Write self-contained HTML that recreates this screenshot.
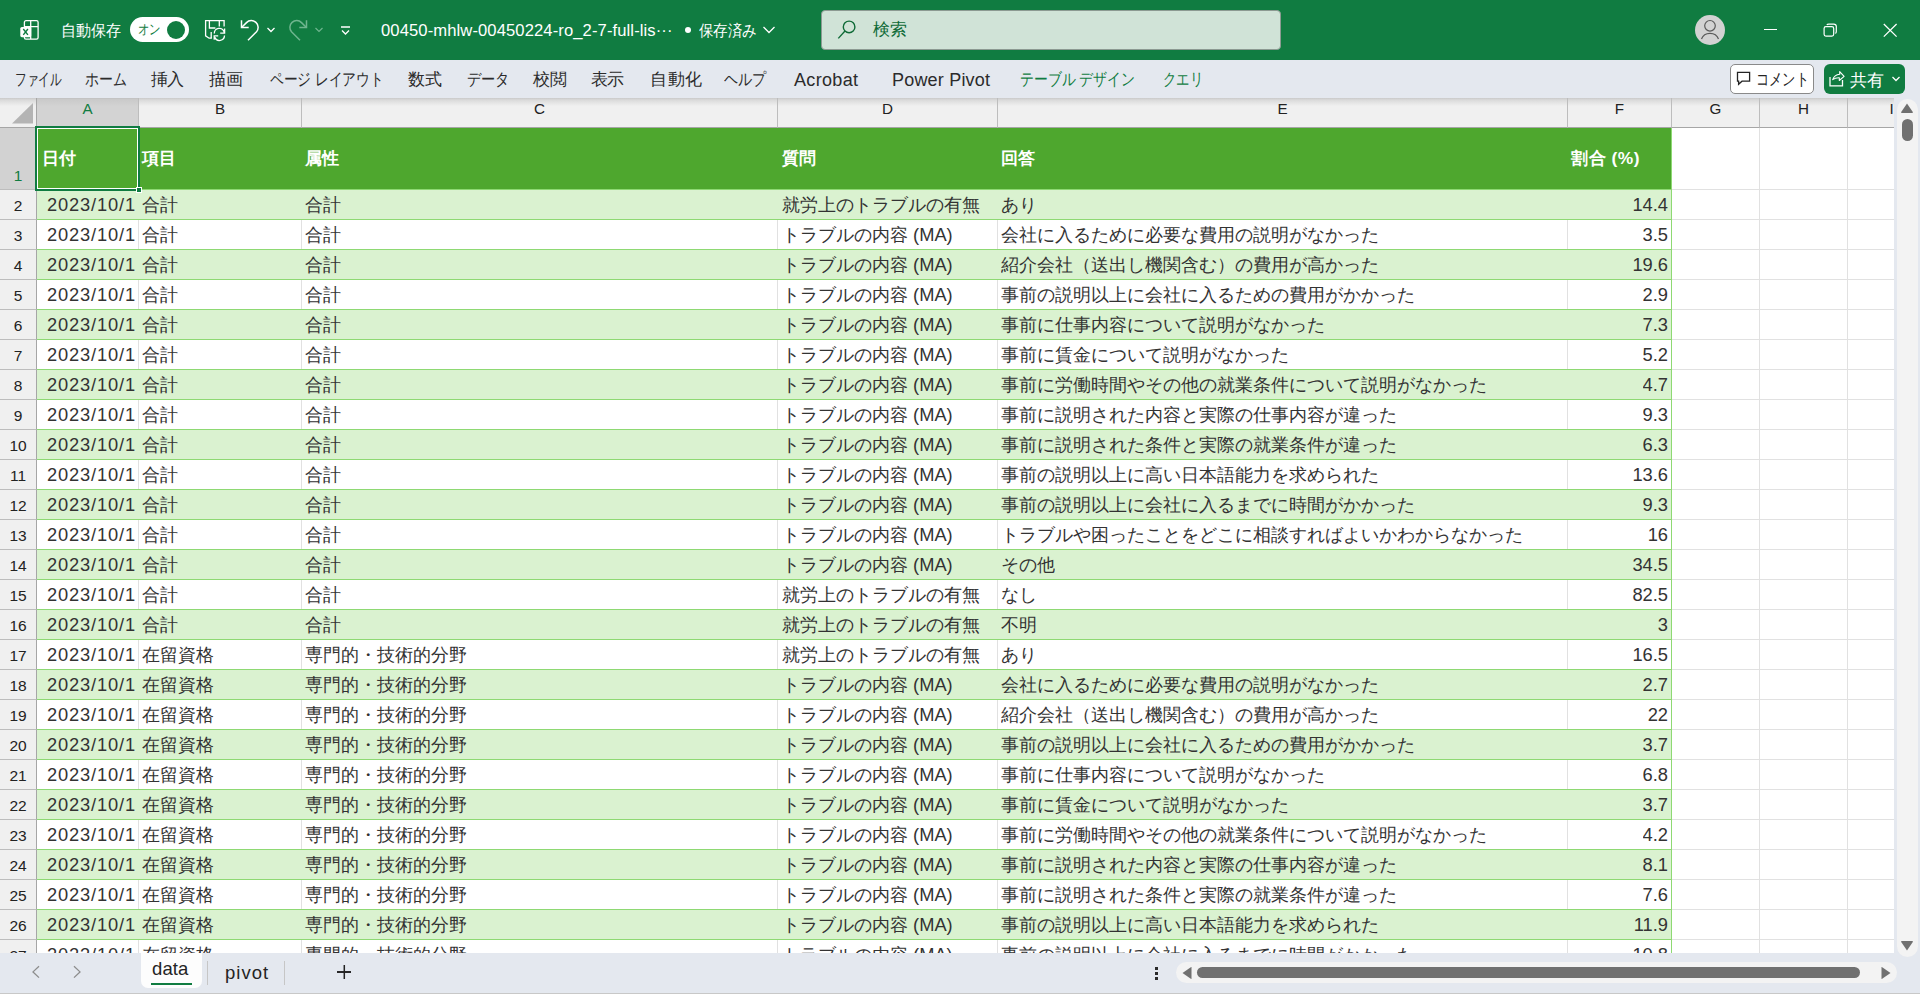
<!DOCTYPE html>
<html><head><meta charset="utf-8">
<style>
*{box-sizing:border-box;margin:0;padding:0}
html,body{width:1920px;height:994px;overflow:hidden;background:#fff;font-family:"Liberation Sans",sans-serif;color:#242424}
.a{position:absolute;white-space:nowrap}
#title{position:absolute;left:0;top:0;width:1920px;height:60px;background:#107C41}
#ribbon{position:absolute;left:0;top:60px;width:1920px;height:38px;background:#E4E8EF}
.tab{position:absolute;top:60px;height:38px;line-height:38px;font-size:16.5px;color:#2b2b2b;white-space:nowrap}
.tab.g{color:#107C41}
#grid{position:absolute;left:0;top:98px;width:1894px;height:855px;overflow:hidden;background:#fff}
.ch{position:absolute;top:0;height:30px;background:#F0F0F0;border-right:1px solid #BDBDBD;border-bottom:1px solid #A6A6A6;font-size:15.2px;text-align:center;line-height:21.5px;color:#222}
.rh{position:absolute;left:0;width:37px;background:#F0F0F0;border-right:1px solid #A6A6A6;border-bottom:1px solid #BDBDBD;font-size:15.5px;text-align:center;color:#222}
.cell{position:absolute;white-space:nowrap;overflow:hidden;font-size:18.3px;line-height:29px;height:29px;color:#333}
.num{letter-spacing:0.85px}
#tabs{position:absolute;left:0;top:953px;width:1920px;height:41px;background:#E4E8EF;border-bottom:1px solid #C8C8C8}
</style></head><body>

<div id="title">
<svg class="a" style="left:19px;top:19px" width="22" height="23" viewBox="0 0 22 23" fill="none" stroke="#fff" stroke-width="1.3"><rect x="5.4" y="1.7" width="13.7" height="18.4" rx="1.6"/><path d="M11.7 1.7 V20.1 M5.4 7.6 H19.1"/><rect x="1.3" y="7.9" width="10.9" height="10.3" rx="1.6" fill="#fff" stroke="none"/><path d="M4.3 10 L8.9 15.9 M8.9 10 L4.3 15.9" stroke="#107C41" stroke-width="1.4"/></svg>
<div id="t_1" class="a" style="left:61px;top:0.5px;height:60px;line-height:60px;font-size:15.5px;color:#fff;transform:scaleX(0.9435);transform-origin:left center;">自動保存</div>
<div class="a" style="left:130px;top:17px;width:59px;height:25px;border-radius:13px;background:#fff"></div>
<div id="t_2" class="a" style="left:138px;top:17px;height:25px;line-height:25px;font-size:14px;color:#107C41;transform:scaleX(0.8148);transform-origin:left center;">オン</div>
<div class="a" style="left:167px;top:21px;width:18px;height:18px;border-radius:9px;background:#107C41"></div>
<svg class="a" style="left:203px;top:19px" width="24" height="23" viewBox="0 0 24 23" fill="none" stroke="#fff" stroke-width="1.3"><path d="M8.8 19.2 H6.1 L2.6 16.8 V1.6 H21.1 V7.5"/><path d="M6.4 1.6 V9 H12.4 M16.3 1.6 V7.5 M8.2 12.9 V19.2"/><path d="M11.3 14.4 A5 5 0 0 1 21.2 13.3 M21.6 9.6 V14.1 H17.2"/><path d="M21.5 16.6 A5 5 0 0 1 11.8 18.2 M11.2 20.8 V16.8 H15.2"/></svg>
<svg class="a" style="left:239px;top:19px" width="22" height="23" viewBox="0 0 22 23" fill="none" stroke="#fff" stroke-width="1.5"><path d="M2.5 1.2 V8.4 H9.7"/><path d="M2.8 8.2 L7.5 3.6 A6.8 6.8 0 0 1 17.5 12.8 L9 21.2"/></svg>
<svg class="a" style="left:266px;top:26px" width="10" height="8" viewBox="0 0 10 8" fill="none" stroke="#fff" stroke-width="1.3"><path d="M1.5 2 L5 5.5 L8.5 2"/></svg>
<svg class="a" style="left:287px;top:19px" width="22" height="23" viewBox="0 0 22 23" fill="none" stroke="#6FB58F" stroke-width="1.5"><path d="M19.5 1.2 V8.4 H12.3"/><path d="M19.2 8.2 L14.5 3.6 A6.8 6.8 0 0 0 4.5 12.8 L13 21.2"/></svg>
<svg class="a" style="left:314px;top:26px" width="10" height="8" viewBox="0 0 10 8" fill="none" stroke="#6FB58F" stroke-width="1.2"><path d="M1.5 2 L5 5.5 L8.5 2"/></svg>
<svg class="a" style="left:339px;top:24px" width="13" height="13" viewBox="0 0 13 13" fill="none" stroke="#fff" stroke-width="1.3"><path d="M2 3 H11 M3 6.5 L6.5 10 L10 6.5"/></svg>
<div id="t_3" class="a" style="left:381px;top:0.5px;height:60px;line-height:60px;font-size:16.6px;color:#fff;letter-spacing:0.102px;">00450-mhlw-00450224-ro_2-7-full-lis···</div>
<div class="a" style="left:685px;top:27px;width:6px;height:6px;border-radius:3px;background:#fff"></div>
<div id="t_4" class="a" style="left:699px;top:0.5px;height:60px;line-height:60px;font-size:15.5px;color:#fff;transform:scaleX(0.9062);transform-origin:left center;">保存済み</div>
<svg class="a" style="left:762px;top:25px" width="14" height="10" viewBox="0 0 14 10" fill="none" stroke="#fff" stroke-width="1.3"><path d="M1.5 2 L7 7.5 L12.5 2"/></svg>
<div class="a" style="left:821px;top:10px;width:460px;height:40px;border-radius:4px;background:#D0E3D7;border:1px solid #8C9A92"></div>
<svg class="a" style="left:836px;top:19px" width="20" height="22" viewBox="0 0 20 22" fill="none" stroke="#0E6A36" stroke-width="1.4"><circle cx="13.1" cy="7.9" r="5.8"/><path d="M9 12 L2.3 19.4"/></svg>
<div id="t_5" class="a" style="left:873px;top:9px;height:40px;line-height:40px;font-size:16.5px;color:#0E6A36;letter-spacing:0.000px;">検索</div>
<div class="a" style="left:1695px;top:15px;width:30px;height:30px;border-radius:15px;background:#D2D2D2"></div>
<svg class="a" style="left:1695px;top:15px" width="30" height="30" viewBox="0 0 30 30" fill="none" stroke="#5A5A5A" stroke-width="1.2"><circle cx="15" cy="10.8" r="5.3"/><path d="M6.5 24 A9 8.5 0 0 1 23.5 24"/></svg>
<div class="a" style="left:1764px;top:29px;width:13px;height:1.2px;background:#fff"></div>
<svg class="a" style="left:1822px;top:22px" width="16" height="16" viewBox="0 0 16 16" fill="none" stroke="#fff" stroke-width="1.2"><rect x="2.1" y="4.7" width="9.6" height="9.4" rx="1.8"/><path d="M4.8 2.9 Q5.4 2.1 6.8 2.1 H11.8 Q14.3 2.1 14.3 4.6 V9.6 Q14.3 10.9 13.4 11.4"/></svg>
<svg class="a" style="left:1882px;top:22px" width="16" height="16" viewBox="0 0 16 16" fill="none" stroke="#fff" stroke-width="1.3"><path d="M1.8 2 L14.6 14.6 M14.6 2 L1.8 14.6"/></svg>
</div>
<div id="ribbon"></div>
<div id="t_6" class="a" style="left:15px;top:60px;height:38px;line-height:38px;font-size:16.5px;color:#2b2b2b;transform:scaleX(0.6866);transform-origin:left center;">ファイル</div>
<div id="t_7" class="a" style="left:85px;top:60px;height:38px;line-height:38px;font-size:16.5px;color:#2b2b2b;transform:scaleX(0.8200);transform-origin:left center;">ホーム</div>
<div id="t_8" class="a" style="left:151px;top:60px;height:38px;line-height:38px;font-size:16.5px;color:#2b2b2b;letter-spacing:-1.000px;">挿入</div>
<div id="t_9" class="a" style="left:209px;top:60px;height:38px;line-height:38px;font-size:16.5px;color:#2b2b2b;letter-spacing:0.000px;">描画</div>
<div id="t_10" class="a" style="left:270px;top:60px;height:38px;line-height:38px;font-size:16.5px;color:#2b2b2b;transform:scaleX(0.8068);transform-origin:left center;">ページ レイアウト</div>
<div id="t_11" class="a" style="left:408px;top:60px;height:38px;line-height:38px;font-size:16.5px;color:#2b2b2b;letter-spacing:0.000px;">数式</div>
<div id="t_12" class="a" style="left:467px;top:60px;height:38px;line-height:38px;font-size:16.5px;color:#2b2b2b;transform:scaleX(0.8367);transform-origin:left center;">データ</div>
<div id="t_13" class="a" style="left:533px;top:60px;height:38px;line-height:38px;font-size:16.5px;color:#2b2b2b;letter-spacing:0.000px;">校閲</div>
<div id="t_14" class="a" style="left:591px;top:60px;height:38px;line-height:38px;font-size:16.5px;color:#2b2b2b;letter-spacing:-1.000px;">表示</div>
<div id="t_15" class="a" style="left:650px;top:60px;height:38px;line-height:38px;font-size:16.5px;color:#2b2b2b;letter-spacing:0.500px;">自動化</div>
<div id="t_16" class="a" style="left:724px;top:60px;height:38px;line-height:38px;font-size:16.5px;color:#2b2b2b;transform:scaleX(0.8269);transform-origin:left center;">ヘルプ</div>
<div id="t_17" class="a" style="left:794px;top:60.5px;height:38px;line-height:38px;font-size:18px;color:#2b2b2b;letter-spacing:0.328px;">Acrobat</div>
<div id="t_18" class="a" style="left:892px;top:60.5px;height:38px;line-height:38px;font-size:18px;color:#2b2b2b;letter-spacing:0.196px;">Power Pivot</div>
<div id="t_19" class="a" style="left:1020px;top:60px;height:38px;line-height:38px;font-size:16.5px;color:#107C41;transform:scaleX(0.8154);transform-origin:left center;">テーブル デザイン</div>
<div id="t_20" class="a" style="left:1163px;top:60px;height:38px;line-height:38px;font-size:16.5px;color:#107C41;transform:scaleX(0.7826);transform-origin:left center;">クエリ</div>
<div class="a" style="left:1730px;top:64px;width:84px;height:30px;border-radius:5px;background:#fff;border:1px solid #8A8A8A"></div>
<svg class="a" style="left:1735px;top:70px" width="17" height="17" viewBox="0 0 17 17" fill="none" stroke="#242424" stroke-width="1.3"><path d="M2.5 2.4 H14.6 V11.2 H7 L3.6 14.2 V11.2 H2.5 Z"/></svg>
<div id="t_21" class="a" style="left:1755.5px;top:63.5px;height:30px;line-height:30px;font-size:16.5px;color:#242424;transform:scaleX(0.7778);transform-origin:left center;">コメント</div>
<div class="a" style="left:1824px;top:64px;width:81px;height:30px;border-radius:6px;background:#107C41"></div>
<svg class="a" style="left:1828px;top:69px" width="18" height="18" viewBox="0 0 18 18" fill="none" stroke="#fff" stroke-width="1.3"><path d="M2 8.1 V16.8 H14.5 V10.9"/><path d="M4.7 10.6 Q6.3 5.6 11.7 5.2 V2.6 L16.1 7.3 L11.3 11.5 V8.7 Q7.4 8.5 4.7 10.6 Z" stroke-width="1.1" stroke-linejoin="round"/></svg>
<div id="t_22" class="a" style="left:1850px;top:64.5px;height:30px;line-height:30px;font-size:16.5px;color:#fff;letter-spacing:-0.500px;">共有</div>
<svg class="a" style="left:1891px;top:75.3px" width="10" height="8" viewBox="0 0 10 8" fill="none" stroke="#fff" stroke-width="1.3"><path d="M1.5 2 L5 5.5 L8.5 2"/></svg>
<div id="grid">
<div class="ch" style="left:0;width:37px;border-right:1px solid #A6A6A6;background:linear-gradient(#C9C9C9 0,#DADADA 2px,#E9E9E9 6px,#F0F0F0 8px)"></div>
<svg class="a" style="left:0;top:0" width="36" height="29" viewBox="0 0 36 29"><path d="M33 5 V25.6 H12 Z" fill="#B4B4B4"/></svg>
<div class="ch" style="left:37px;width:102px;background:linear-gradient(#BDBDBD 0,#C9C9C9 1px,#D0D0D0 6px,#D3D3D3 8px);color:#107C41">A</div>
<div class="ch" style="left:139px;width:163px;background:linear-gradient(#C9C9C9 0,#DADADA 2px,#E9E9E9 6px,#F0F0F0 8px);color:#222">B</div>
<div class="ch" style="left:302px;width:476px;background:linear-gradient(#C9C9C9 0,#DADADA 2px,#E9E9E9 6px,#F0F0F0 8px);color:#222">C</div>
<div class="ch" style="left:778px;width:220px;background:linear-gradient(#C9C9C9 0,#DADADA 2px,#E9E9E9 6px,#F0F0F0 8px);color:#222">D</div>
<div class="ch" style="left:998px;width:570px;background:linear-gradient(#C9C9C9 0,#DADADA 2px,#E9E9E9 6px,#F0F0F0 8px);color:#222">E</div>
<div class="ch" style="left:1568px;width:104px;background:linear-gradient(#C9C9C9 0,#DADADA 2px,#E9E9E9 6px,#F0F0F0 8px);color:#222">F</div>
<div class="ch" style="left:1672px;width:88px;background:linear-gradient(#C9C9C9 0,#DADADA 2px,#E9E9E9 6px,#F0F0F0 8px);color:#222">G</div>
<div class="ch" style="left:1760px;width:88px;background:linear-gradient(#C9C9C9 0,#DADADA 2px,#E9E9E9 6px,#F0F0F0 8px);color:#222">H</div>
<div class="ch" style="left:1848px;width:88px;background:linear-gradient(#C9C9C9 0,#DADADA 2px,#E9E9E9 6px,#F0F0F0 8px);color:#222">I</div>
<div class="rh" style="top:30px;height:62px;background:#D2D2D2;color:#107C41;line-height:96.3px">1</div>
<div class="rh" style="top:92px;height:30px;line-height:32px">2</div>
<div class="rh" style="top:122px;height:30px;line-height:32px">3</div>
<div class="rh" style="top:152px;height:30px;line-height:32px">4</div>
<div class="rh" style="top:182px;height:30px;line-height:32px">5</div>
<div class="rh" style="top:212px;height:30px;line-height:32px">6</div>
<div class="rh" style="top:242px;height:30px;line-height:32px">7</div>
<div class="rh" style="top:272px;height:30px;line-height:32px">8</div>
<div class="rh" style="top:302px;height:30px;line-height:32px">9</div>
<div class="rh" style="top:332px;height:30px;line-height:32px">10</div>
<div class="rh" style="top:362px;height:30px;line-height:32px">11</div>
<div class="rh" style="top:392px;height:30px;line-height:32px">12</div>
<div class="rh" style="top:422px;height:30px;line-height:32px">13</div>
<div class="rh" style="top:452px;height:30px;line-height:32px">14</div>
<div class="rh" style="top:482px;height:30px;line-height:32px">15</div>
<div class="rh" style="top:512px;height:30px;line-height:32px">16</div>
<div class="rh" style="top:542px;height:30px;line-height:32px">17</div>
<div class="rh" style="top:572px;height:30px;line-height:32px">18</div>
<div class="rh" style="top:602px;height:30px;line-height:32px">19</div>
<div class="rh" style="top:632px;height:30px;line-height:32px">20</div>
<div class="rh" style="top:662px;height:30px;line-height:32px">21</div>
<div class="rh" style="top:692px;height:30px;line-height:32px">22</div>
<div class="rh" style="top:722px;height:30px;line-height:32px">23</div>
<div class="rh" style="top:752px;height:30px;line-height:32px">24</div>
<div class="rh" style="top:782px;height:30px;line-height:32px">25</div>
<div class="rh" style="top:812px;height:30px;line-height:32px">26</div>
<div class="rh" style="top:842px;height:30px;line-height:32px">27</div>
<div class="rh" style="top:872px;height:30px;line-height:32px">28</div>
<div class="a" style="left:1759px;top:30px;width:1px;height:900px;background:#E1E1E1"></div>
<div class="a" style="left:1847px;top:30px;width:1px;height:900px;background:#E1E1E1"></div>
<div class="a" style="left:1935px;top:30px;width:1px;height:900px;background:#E1E1E1"></div>
<div class="a" style="left:1671px;top:91px;width:300px;height:1px;background:#E1E1E1"></div>
<div class="a" style="left:1671px;top:121px;width:300px;height:1px;background:#E1E1E1"></div>
<div class="a" style="left:1671px;top:151px;width:300px;height:1px;background:#E1E1E1"></div>
<div class="a" style="left:1671px;top:181px;width:300px;height:1px;background:#E1E1E1"></div>
<div class="a" style="left:1671px;top:211px;width:300px;height:1px;background:#E1E1E1"></div>
<div class="a" style="left:1671px;top:241px;width:300px;height:1px;background:#E1E1E1"></div>
<div class="a" style="left:1671px;top:271px;width:300px;height:1px;background:#E1E1E1"></div>
<div class="a" style="left:1671px;top:301px;width:300px;height:1px;background:#E1E1E1"></div>
<div class="a" style="left:1671px;top:331px;width:300px;height:1px;background:#E1E1E1"></div>
<div class="a" style="left:1671px;top:361px;width:300px;height:1px;background:#E1E1E1"></div>
<div class="a" style="left:1671px;top:391px;width:300px;height:1px;background:#E1E1E1"></div>
<div class="a" style="left:1671px;top:421px;width:300px;height:1px;background:#E1E1E1"></div>
<div class="a" style="left:1671px;top:451px;width:300px;height:1px;background:#E1E1E1"></div>
<div class="a" style="left:1671px;top:481px;width:300px;height:1px;background:#E1E1E1"></div>
<div class="a" style="left:1671px;top:511px;width:300px;height:1px;background:#E1E1E1"></div>
<div class="a" style="left:1671px;top:541px;width:300px;height:1px;background:#E1E1E1"></div>
<div class="a" style="left:1671px;top:571px;width:300px;height:1px;background:#E1E1E1"></div>
<div class="a" style="left:1671px;top:601px;width:300px;height:1px;background:#E1E1E1"></div>
<div class="a" style="left:1671px;top:631px;width:300px;height:1px;background:#E1E1E1"></div>
<div class="a" style="left:1671px;top:661px;width:300px;height:1px;background:#E1E1E1"></div>
<div class="a" style="left:1671px;top:691px;width:300px;height:1px;background:#E1E1E1"></div>
<div class="a" style="left:1671px;top:721px;width:300px;height:1px;background:#E1E1E1"></div>
<div class="a" style="left:1671px;top:751px;width:300px;height:1px;background:#E1E1E1"></div>
<div class="a" style="left:1671px;top:781px;width:300px;height:1px;background:#E1E1E1"></div>
<div class="a" style="left:1671px;top:811px;width:300px;height:1px;background:#E1E1E1"></div>
<div class="a" style="left:1671px;top:841px;width:300px;height:1px;background:#E1E1E1"></div>
<div class="a" style="left:1671px;top:871px;width:300px;height:1px;background:#E1E1E1"></div>
<div class="a" style="left:1671px;top:901px;width:300px;height:1px;background:#E1E1E1"></div>
<div class="a" style="left:37px;top:30px;width:1634px;height:61px;background:#4EA72E"></div>
<div class="a" style="left:41.5px;top:29.5px;height:61px;line-height:61px;font-size:17.4px;font-weight:bold;color:#fff">日付</div>
<div class="a" style="left:141.5px;top:29.5px;height:61px;line-height:61px;font-size:17.4px;font-weight:bold;color:#fff">項目</div>
<div class="a" style="left:304.5px;top:29.5px;height:61px;line-height:61px;font-size:17.4px;font-weight:bold;color:#fff">属性</div>
<div class="a" style="left:781.5px;top:29.5px;height:61px;line-height:61px;font-size:17.4px;font-weight:bold;color:#fff">質問</div>
<div class="a" style="left:1000.5px;top:29.5px;height:61px;line-height:61px;font-size:17.4px;font-weight:bold;color:#fff">回答</div>
<div class="a" style="left:1571px;top:29.5px;height:61px;line-height:61px;font-size:17.4px;font-weight:bold;color:#fff;letter-spacing:0.55px">割合 (%)</div>
<div class="a" style="left:37px;top:91px;width:1634px;height:1px;background:#8ED973"></div>
<div class="a" style="left:37px;top:92px;width:1634px;height:29px;background:#DAF2D0"></div>
<div class="a" style="left:37px;top:121px;width:1634px;height:1px;background:#8ED973"></div>
<div class="cell num" style="left:47px;top:92px">2023/10/1</div>
<div class="cell" style="left:142px;top:92px">合計</div>
<div class="cell" style="left:305px;top:92px">合計</div>
<div class="cell" style="left:782px;top:92px">就労上のトラブルの有無</div>
<div class="cell" style="left:1001px;top:92px">あり</div>
<div class="cell" style="right:226px;top:92px">14.4</div>
<div class="a" style="left:37px;top:122px;width:1634px;height:29px;background:#FFFFFF"></div>
<div class="a" style="left:138px;top:122px;width:1px;height:29px;background:#E1E1E1"></div>
<div class="a" style="left:301px;top:122px;width:1px;height:29px;background:#E1E1E1"></div>
<div class="a" style="left:777px;top:122px;width:1px;height:29px;background:#E1E1E1"></div>
<div class="a" style="left:997px;top:122px;width:1px;height:29px;background:#E1E1E1"></div>
<div class="a" style="left:1567px;top:122px;width:1px;height:29px;background:#E1E1E1"></div>
<div class="a" style="left:37px;top:151px;width:1634px;height:1px;background:#8ED973"></div>
<div class="cell num" style="left:47px;top:122px">2023/10/1</div>
<div class="cell" style="left:142px;top:122px">合計</div>
<div class="cell" style="left:305px;top:122px">合計</div>
<div class="cell" style="left:782px;top:122px">トラブルの内容 (MA)</div>
<div class="cell" style="left:1001px;top:122px">会社に入るために必要な費用の説明がなかった</div>
<div class="cell" style="right:226px;top:122px">3.5</div>
<div class="a" style="left:37px;top:152px;width:1634px;height:29px;background:#DAF2D0"></div>
<div class="a" style="left:37px;top:181px;width:1634px;height:1px;background:#8ED973"></div>
<div class="cell num" style="left:47px;top:152px">2023/10/1</div>
<div class="cell" style="left:142px;top:152px">合計</div>
<div class="cell" style="left:305px;top:152px">合計</div>
<div class="cell" style="left:782px;top:152px">トラブルの内容 (MA)</div>
<div class="cell" style="left:1001px;top:152px">紹介会社（送出し機関含む）の費用が高かった</div>
<div class="cell" style="right:226px;top:152px">19.6</div>
<div class="a" style="left:37px;top:182px;width:1634px;height:29px;background:#FFFFFF"></div>
<div class="a" style="left:138px;top:182px;width:1px;height:29px;background:#E1E1E1"></div>
<div class="a" style="left:301px;top:182px;width:1px;height:29px;background:#E1E1E1"></div>
<div class="a" style="left:777px;top:182px;width:1px;height:29px;background:#E1E1E1"></div>
<div class="a" style="left:997px;top:182px;width:1px;height:29px;background:#E1E1E1"></div>
<div class="a" style="left:1567px;top:182px;width:1px;height:29px;background:#E1E1E1"></div>
<div class="a" style="left:37px;top:211px;width:1634px;height:1px;background:#8ED973"></div>
<div class="cell num" style="left:47px;top:182px">2023/10/1</div>
<div class="cell" style="left:142px;top:182px">合計</div>
<div class="cell" style="left:305px;top:182px">合計</div>
<div class="cell" style="left:782px;top:182px">トラブルの内容 (MA)</div>
<div class="cell" style="left:1001px;top:182px">事前の説明以上に会社に入るための費用がかかった</div>
<div class="cell" style="right:226px;top:182px">2.9</div>
<div class="a" style="left:37px;top:212px;width:1634px;height:29px;background:#DAF2D0"></div>
<div class="a" style="left:37px;top:241px;width:1634px;height:1px;background:#8ED973"></div>
<div class="cell num" style="left:47px;top:212px">2023/10/1</div>
<div class="cell" style="left:142px;top:212px">合計</div>
<div class="cell" style="left:305px;top:212px">合計</div>
<div class="cell" style="left:782px;top:212px">トラブルの内容 (MA)</div>
<div class="cell" style="left:1001px;top:212px">事前に仕事内容について説明がなかった</div>
<div class="cell" style="right:226px;top:212px">7.3</div>
<div class="a" style="left:37px;top:242px;width:1634px;height:29px;background:#FFFFFF"></div>
<div class="a" style="left:138px;top:242px;width:1px;height:29px;background:#E1E1E1"></div>
<div class="a" style="left:301px;top:242px;width:1px;height:29px;background:#E1E1E1"></div>
<div class="a" style="left:777px;top:242px;width:1px;height:29px;background:#E1E1E1"></div>
<div class="a" style="left:997px;top:242px;width:1px;height:29px;background:#E1E1E1"></div>
<div class="a" style="left:1567px;top:242px;width:1px;height:29px;background:#E1E1E1"></div>
<div class="a" style="left:37px;top:271px;width:1634px;height:1px;background:#8ED973"></div>
<div class="cell num" style="left:47px;top:242px">2023/10/1</div>
<div class="cell" style="left:142px;top:242px">合計</div>
<div class="cell" style="left:305px;top:242px">合計</div>
<div class="cell" style="left:782px;top:242px">トラブルの内容 (MA)</div>
<div class="cell" style="left:1001px;top:242px">事前に賃金について説明がなかった</div>
<div class="cell" style="right:226px;top:242px">5.2</div>
<div class="a" style="left:37px;top:272px;width:1634px;height:29px;background:#DAF2D0"></div>
<div class="a" style="left:37px;top:301px;width:1634px;height:1px;background:#8ED973"></div>
<div class="cell num" style="left:47px;top:272px">2023/10/1</div>
<div class="cell" style="left:142px;top:272px">合計</div>
<div class="cell" style="left:305px;top:272px">合計</div>
<div class="cell" style="left:782px;top:272px">トラブルの内容 (MA)</div>
<div class="cell" style="left:1001px;top:272px">事前に労働時間やその他の就業条件について説明がなかった</div>
<div class="cell" style="right:226px;top:272px">4.7</div>
<div class="a" style="left:37px;top:302px;width:1634px;height:29px;background:#FFFFFF"></div>
<div class="a" style="left:138px;top:302px;width:1px;height:29px;background:#E1E1E1"></div>
<div class="a" style="left:301px;top:302px;width:1px;height:29px;background:#E1E1E1"></div>
<div class="a" style="left:777px;top:302px;width:1px;height:29px;background:#E1E1E1"></div>
<div class="a" style="left:997px;top:302px;width:1px;height:29px;background:#E1E1E1"></div>
<div class="a" style="left:1567px;top:302px;width:1px;height:29px;background:#E1E1E1"></div>
<div class="a" style="left:37px;top:331px;width:1634px;height:1px;background:#8ED973"></div>
<div class="cell num" style="left:47px;top:302px">2023/10/1</div>
<div class="cell" style="left:142px;top:302px">合計</div>
<div class="cell" style="left:305px;top:302px">合計</div>
<div class="cell" style="left:782px;top:302px">トラブルの内容 (MA)</div>
<div class="cell" style="left:1001px;top:302px">事前に説明された内容と実際の仕事内容が違った</div>
<div class="cell" style="right:226px;top:302px">9.3</div>
<div class="a" style="left:37px;top:332px;width:1634px;height:29px;background:#DAF2D0"></div>
<div class="a" style="left:37px;top:361px;width:1634px;height:1px;background:#8ED973"></div>
<div class="cell num" style="left:47px;top:332px">2023/10/1</div>
<div class="cell" style="left:142px;top:332px">合計</div>
<div class="cell" style="left:305px;top:332px">合計</div>
<div class="cell" style="left:782px;top:332px">トラブルの内容 (MA)</div>
<div class="cell" style="left:1001px;top:332px">事前に説明された条件と実際の就業条件が違った</div>
<div class="cell" style="right:226px;top:332px">6.3</div>
<div class="a" style="left:37px;top:362px;width:1634px;height:29px;background:#FFFFFF"></div>
<div class="a" style="left:138px;top:362px;width:1px;height:29px;background:#E1E1E1"></div>
<div class="a" style="left:301px;top:362px;width:1px;height:29px;background:#E1E1E1"></div>
<div class="a" style="left:777px;top:362px;width:1px;height:29px;background:#E1E1E1"></div>
<div class="a" style="left:997px;top:362px;width:1px;height:29px;background:#E1E1E1"></div>
<div class="a" style="left:1567px;top:362px;width:1px;height:29px;background:#E1E1E1"></div>
<div class="a" style="left:37px;top:391px;width:1634px;height:1px;background:#8ED973"></div>
<div class="cell num" style="left:47px;top:362px">2023/10/1</div>
<div class="cell" style="left:142px;top:362px">合計</div>
<div class="cell" style="left:305px;top:362px">合計</div>
<div class="cell" style="left:782px;top:362px">トラブルの内容 (MA)</div>
<div class="cell" style="left:1001px;top:362px">事前の説明以上に高い日本語能力を求められた</div>
<div class="cell" style="right:226px;top:362px">13.6</div>
<div class="a" style="left:37px;top:392px;width:1634px;height:29px;background:#DAF2D0"></div>
<div class="a" style="left:37px;top:421px;width:1634px;height:1px;background:#8ED973"></div>
<div class="cell num" style="left:47px;top:392px">2023/10/1</div>
<div class="cell" style="left:142px;top:392px">合計</div>
<div class="cell" style="left:305px;top:392px">合計</div>
<div class="cell" style="left:782px;top:392px">トラブルの内容 (MA)</div>
<div class="cell" style="left:1001px;top:392px">事前の説明以上に会社に入るまでに時間がかかった</div>
<div class="cell" style="right:226px;top:392px">9.3</div>
<div class="a" style="left:37px;top:422px;width:1634px;height:29px;background:#FFFFFF"></div>
<div class="a" style="left:138px;top:422px;width:1px;height:29px;background:#E1E1E1"></div>
<div class="a" style="left:301px;top:422px;width:1px;height:29px;background:#E1E1E1"></div>
<div class="a" style="left:777px;top:422px;width:1px;height:29px;background:#E1E1E1"></div>
<div class="a" style="left:997px;top:422px;width:1px;height:29px;background:#E1E1E1"></div>
<div class="a" style="left:1567px;top:422px;width:1px;height:29px;background:#E1E1E1"></div>
<div class="a" style="left:37px;top:451px;width:1634px;height:1px;background:#8ED973"></div>
<div class="cell num" style="left:47px;top:422px">2023/10/1</div>
<div class="cell" style="left:142px;top:422px">合計</div>
<div class="cell" style="left:305px;top:422px">合計</div>
<div class="cell" style="left:782px;top:422px">トラブルの内容 (MA)</div>
<div class="cell" style="left:1001px;top:422px">トラブルや困ったことをどこに相談すればよいかわからなかった</div>
<div class="cell" style="right:226px;top:422px">16</div>
<div class="a" style="left:37px;top:452px;width:1634px;height:29px;background:#DAF2D0"></div>
<div class="a" style="left:37px;top:481px;width:1634px;height:1px;background:#8ED973"></div>
<div class="cell num" style="left:47px;top:452px">2023/10/1</div>
<div class="cell" style="left:142px;top:452px">合計</div>
<div class="cell" style="left:305px;top:452px">合計</div>
<div class="cell" style="left:782px;top:452px">トラブルの内容 (MA)</div>
<div class="cell" style="left:1001px;top:452px">その他</div>
<div class="cell" style="right:226px;top:452px">34.5</div>
<div class="a" style="left:37px;top:482px;width:1634px;height:29px;background:#FFFFFF"></div>
<div class="a" style="left:138px;top:482px;width:1px;height:29px;background:#E1E1E1"></div>
<div class="a" style="left:301px;top:482px;width:1px;height:29px;background:#E1E1E1"></div>
<div class="a" style="left:777px;top:482px;width:1px;height:29px;background:#E1E1E1"></div>
<div class="a" style="left:997px;top:482px;width:1px;height:29px;background:#E1E1E1"></div>
<div class="a" style="left:1567px;top:482px;width:1px;height:29px;background:#E1E1E1"></div>
<div class="a" style="left:37px;top:511px;width:1634px;height:1px;background:#8ED973"></div>
<div class="cell num" style="left:47px;top:482px">2023/10/1</div>
<div class="cell" style="left:142px;top:482px">合計</div>
<div class="cell" style="left:305px;top:482px">合計</div>
<div class="cell" style="left:782px;top:482px">就労上のトラブルの有無</div>
<div class="cell" style="left:1001px;top:482px">なし</div>
<div class="cell" style="right:226px;top:482px">82.5</div>
<div class="a" style="left:37px;top:512px;width:1634px;height:29px;background:#DAF2D0"></div>
<div class="a" style="left:37px;top:541px;width:1634px;height:1px;background:#8ED973"></div>
<div class="cell num" style="left:47px;top:512px">2023/10/1</div>
<div class="cell" style="left:142px;top:512px">合計</div>
<div class="cell" style="left:305px;top:512px">合計</div>
<div class="cell" style="left:782px;top:512px">就労上のトラブルの有無</div>
<div class="cell" style="left:1001px;top:512px">不明</div>
<div class="cell" style="right:226px;top:512px">3</div>
<div class="a" style="left:37px;top:542px;width:1634px;height:29px;background:#FFFFFF"></div>
<div class="a" style="left:138px;top:542px;width:1px;height:29px;background:#E1E1E1"></div>
<div class="a" style="left:301px;top:542px;width:1px;height:29px;background:#E1E1E1"></div>
<div class="a" style="left:777px;top:542px;width:1px;height:29px;background:#E1E1E1"></div>
<div class="a" style="left:997px;top:542px;width:1px;height:29px;background:#E1E1E1"></div>
<div class="a" style="left:1567px;top:542px;width:1px;height:29px;background:#E1E1E1"></div>
<div class="a" style="left:37px;top:571px;width:1634px;height:1px;background:#8ED973"></div>
<div class="cell num" style="left:47px;top:542px">2023/10/1</div>
<div class="cell" style="left:142px;top:542px">在留資格</div>
<div class="cell" style="left:305px;top:542px">専門的・技術的分野</div>
<div class="cell" style="left:782px;top:542px">就労上のトラブルの有無</div>
<div class="cell" style="left:1001px;top:542px">あり</div>
<div class="cell" style="right:226px;top:542px">16.5</div>
<div class="a" style="left:37px;top:572px;width:1634px;height:29px;background:#DAF2D0"></div>
<div class="a" style="left:37px;top:601px;width:1634px;height:1px;background:#8ED973"></div>
<div class="cell num" style="left:47px;top:572px">2023/10/1</div>
<div class="cell" style="left:142px;top:572px">在留資格</div>
<div class="cell" style="left:305px;top:572px">専門的・技術的分野</div>
<div class="cell" style="left:782px;top:572px">トラブルの内容 (MA)</div>
<div class="cell" style="left:1001px;top:572px">会社に入るために必要な費用の説明がなかった</div>
<div class="cell" style="right:226px;top:572px">2.7</div>
<div class="a" style="left:37px;top:602px;width:1634px;height:29px;background:#FFFFFF"></div>
<div class="a" style="left:138px;top:602px;width:1px;height:29px;background:#E1E1E1"></div>
<div class="a" style="left:301px;top:602px;width:1px;height:29px;background:#E1E1E1"></div>
<div class="a" style="left:777px;top:602px;width:1px;height:29px;background:#E1E1E1"></div>
<div class="a" style="left:997px;top:602px;width:1px;height:29px;background:#E1E1E1"></div>
<div class="a" style="left:1567px;top:602px;width:1px;height:29px;background:#E1E1E1"></div>
<div class="a" style="left:37px;top:631px;width:1634px;height:1px;background:#8ED973"></div>
<div class="cell num" style="left:47px;top:602px">2023/10/1</div>
<div class="cell" style="left:142px;top:602px">在留資格</div>
<div class="cell" style="left:305px;top:602px">専門的・技術的分野</div>
<div class="cell" style="left:782px;top:602px">トラブルの内容 (MA)</div>
<div class="cell" style="left:1001px;top:602px">紹介会社（送出し機関含む）の費用が高かった</div>
<div class="cell" style="right:226px;top:602px">22</div>
<div class="a" style="left:37px;top:632px;width:1634px;height:29px;background:#DAF2D0"></div>
<div class="a" style="left:37px;top:661px;width:1634px;height:1px;background:#8ED973"></div>
<div class="cell num" style="left:47px;top:632px">2023/10/1</div>
<div class="cell" style="left:142px;top:632px">在留資格</div>
<div class="cell" style="left:305px;top:632px">専門的・技術的分野</div>
<div class="cell" style="left:782px;top:632px">トラブルの内容 (MA)</div>
<div class="cell" style="left:1001px;top:632px">事前の説明以上に会社に入るための費用がかかった</div>
<div class="cell" style="right:226px;top:632px">3.7</div>
<div class="a" style="left:37px;top:662px;width:1634px;height:29px;background:#FFFFFF"></div>
<div class="a" style="left:138px;top:662px;width:1px;height:29px;background:#E1E1E1"></div>
<div class="a" style="left:301px;top:662px;width:1px;height:29px;background:#E1E1E1"></div>
<div class="a" style="left:777px;top:662px;width:1px;height:29px;background:#E1E1E1"></div>
<div class="a" style="left:997px;top:662px;width:1px;height:29px;background:#E1E1E1"></div>
<div class="a" style="left:1567px;top:662px;width:1px;height:29px;background:#E1E1E1"></div>
<div class="a" style="left:37px;top:691px;width:1634px;height:1px;background:#8ED973"></div>
<div class="cell num" style="left:47px;top:662px">2023/10/1</div>
<div class="cell" style="left:142px;top:662px">在留資格</div>
<div class="cell" style="left:305px;top:662px">専門的・技術的分野</div>
<div class="cell" style="left:782px;top:662px">トラブルの内容 (MA)</div>
<div class="cell" style="left:1001px;top:662px">事前に仕事内容について説明がなかった</div>
<div class="cell" style="right:226px;top:662px">6.8</div>
<div class="a" style="left:37px;top:692px;width:1634px;height:29px;background:#DAF2D0"></div>
<div class="a" style="left:37px;top:721px;width:1634px;height:1px;background:#8ED973"></div>
<div class="cell num" style="left:47px;top:692px">2023/10/1</div>
<div class="cell" style="left:142px;top:692px">在留資格</div>
<div class="cell" style="left:305px;top:692px">専門的・技術的分野</div>
<div class="cell" style="left:782px;top:692px">トラブルの内容 (MA)</div>
<div class="cell" style="left:1001px;top:692px">事前に賃金について説明がなかった</div>
<div class="cell" style="right:226px;top:692px">3.7</div>
<div class="a" style="left:37px;top:722px;width:1634px;height:29px;background:#FFFFFF"></div>
<div class="a" style="left:138px;top:722px;width:1px;height:29px;background:#E1E1E1"></div>
<div class="a" style="left:301px;top:722px;width:1px;height:29px;background:#E1E1E1"></div>
<div class="a" style="left:777px;top:722px;width:1px;height:29px;background:#E1E1E1"></div>
<div class="a" style="left:997px;top:722px;width:1px;height:29px;background:#E1E1E1"></div>
<div class="a" style="left:1567px;top:722px;width:1px;height:29px;background:#E1E1E1"></div>
<div class="a" style="left:37px;top:751px;width:1634px;height:1px;background:#8ED973"></div>
<div class="cell num" style="left:47px;top:722px">2023/10/1</div>
<div class="cell" style="left:142px;top:722px">在留資格</div>
<div class="cell" style="left:305px;top:722px">専門的・技術的分野</div>
<div class="cell" style="left:782px;top:722px">トラブルの内容 (MA)</div>
<div class="cell" style="left:1001px;top:722px">事前に労働時間やその他の就業条件について説明がなかった</div>
<div class="cell" style="right:226px;top:722px">4.2</div>
<div class="a" style="left:37px;top:752px;width:1634px;height:29px;background:#DAF2D0"></div>
<div class="a" style="left:37px;top:781px;width:1634px;height:1px;background:#8ED973"></div>
<div class="cell num" style="left:47px;top:752px">2023/10/1</div>
<div class="cell" style="left:142px;top:752px">在留資格</div>
<div class="cell" style="left:305px;top:752px">専門的・技術的分野</div>
<div class="cell" style="left:782px;top:752px">トラブルの内容 (MA)</div>
<div class="cell" style="left:1001px;top:752px">事前に説明された内容と実際の仕事内容が違った</div>
<div class="cell" style="right:226px;top:752px">8.1</div>
<div class="a" style="left:37px;top:782px;width:1634px;height:29px;background:#FFFFFF"></div>
<div class="a" style="left:138px;top:782px;width:1px;height:29px;background:#E1E1E1"></div>
<div class="a" style="left:301px;top:782px;width:1px;height:29px;background:#E1E1E1"></div>
<div class="a" style="left:777px;top:782px;width:1px;height:29px;background:#E1E1E1"></div>
<div class="a" style="left:997px;top:782px;width:1px;height:29px;background:#E1E1E1"></div>
<div class="a" style="left:1567px;top:782px;width:1px;height:29px;background:#E1E1E1"></div>
<div class="a" style="left:37px;top:811px;width:1634px;height:1px;background:#8ED973"></div>
<div class="cell num" style="left:47px;top:782px">2023/10/1</div>
<div class="cell" style="left:142px;top:782px">在留資格</div>
<div class="cell" style="left:305px;top:782px">専門的・技術的分野</div>
<div class="cell" style="left:782px;top:782px">トラブルの内容 (MA)</div>
<div class="cell" style="left:1001px;top:782px">事前に説明された条件と実際の就業条件が違った</div>
<div class="cell" style="right:226px;top:782px">7.6</div>
<div class="a" style="left:37px;top:812px;width:1634px;height:29px;background:#DAF2D0"></div>
<div class="a" style="left:37px;top:841px;width:1634px;height:1px;background:#8ED973"></div>
<div class="cell num" style="left:47px;top:812px">2023/10/1</div>
<div class="cell" style="left:142px;top:812px">在留資格</div>
<div class="cell" style="left:305px;top:812px">専門的・技術的分野</div>
<div class="cell" style="left:782px;top:812px">トラブルの内容 (MA)</div>
<div class="cell" style="left:1001px;top:812px">事前の説明以上に高い日本語能力を求められた</div>
<div class="cell" style="right:226px;top:812px">11.9</div>
<div class="a" style="left:37px;top:842px;width:1634px;height:29px;background:#FFFFFF"></div>
<div class="a" style="left:138px;top:842px;width:1px;height:29px;background:#E1E1E1"></div>
<div class="a" style="left:301px;top:842px;width:1px;height:29px;background:#E1E1E1"></div>
<div class="a" style="left:777px;top:842px;width:1px;height:29px;background:#E1E1E1"></div>
<div class="a" style="left:997px;top:842px;width:1px;height:29px;background:#E1E1E1"></div>
<div class="a" style="left:1567px;top:842px;width:1px;height:29px;background:#E1E1E1"></div>
<div class="a" style="left:37px;top:871px;width:1634px;height:1px;background:#8ED973"></div>
<div class="cell num" style="left:47px;top:842px">2023/10/1</div>
<div class="cell" style="left:142px;top:842px">在留資格</div>
<div class="cell" style="left:305px;top:842px">専門的・技術的分野</div>
<div class="cell" style="left:782px;top:842px">トラブルの内容 (MA)</div>
<div class="cell" style="left:1001px;top:842px">事前の説明以上に会社に入るまでに時間がかかった</div>
<div class="cell" style="right:226px;top:842px">10.8</div>
<div class="a" style="left:1671px;top:30px;width:1px;height:900px;background:#8ED973"></div>
<div class="a" style="left:35px;top:28px;width:105px;height:65px;border:2px solid #107C41"></div>
<div class="a" style="left:37px;top:30px;width:101px;height:61px;border:1px solid #fff"></div>
<div class="a" style="left:136px;top:89px;width:5.5px;height:5.5px;background:#107C41;border:1px solid #fff"></div>
</div>
<div id="tabs"></div>
<svg class="a" style="left:29px;top:963px" width="14" height="18" viewBox="0 0 14 18" fill="none" stroke="#8C8C8C" stroke-width="1.3"><path d="M10 3.2 L4 8.9 L10 14.6"/></svg>
<svg class="a" style="left:70px;top:963px" width="14" height="18" viewBox="0 0 14 18" fill="none" stroke="#8C8C8C" stroke-width="1.3"><path d="M4 3.2 L10 8.9 L4 14.6"/></svg>
<div class="a" style="left:141px;top:953px;width:61px;height:35px;background:#FDFDFD;border-radius:0 0 7px 7px"></div>
<div id="t_23" class="a" style="left:152px;top:955px;height:28px;line-height:28px;font-size:18.5px;color:#242424;letter-spacing:0.094px;">data</div>
<div class="a" style="left:151px;top:983px;width:41px;height:2.4px;background:#107C41"></div>
<div class="a" style="left:207px;top:961px;width:1px;height:24px;background:#C6C6C6"></div>
<div id="t_24" class="a" style="left:225px;top:959px;height:28px;line-height:28px;font-size:18.5px;color:#242424;letter-spacing:1.016px;">pivot</div>
<div class="a" style="left:284px;top:961px;width:1px;height:24px;background:#C6C6C6"></div>
<svg class="a" style="left:335px;top:963px" width="18" height="18" viewBox="0 0 18 18" fill="none" stroke="#222" stroke-width="1.5"><path d="M9.3 2 V16 M2 9 H16" /><path d="M2 9 H16" stroke-width="1.7"/></svg>
<svg class="a" style="left:1150px;top:964px" width="12" height="18" viewBox="0 0 12 18" fill="#2b2b2b"><rect x="5" y="3" width="3" height="3"/><rect x="5" y="8" width="3" height="3"/><rect x="5" y="13" width="3" height="3"/></svg>
<div class="a" style="left:1176px;top:962px;width:721px;height:21px;border-radius:10.5px;background:#F3F3F3"></div>
<svg class="a" style="left:1180px;top:965px" width="14" height="16" viewBox="0 0 14 16" fill="#707070"><path d="M2.5 8 L10.8 2.2 Q11.5 1.8 11.5 2.6 V13.4 Q11.5 14.2 10.8 13.8 Z"/></svg>
<div class="a" style="left:1197px;top:967px;width:663px;height:11px;border-radius:5.5px;background:#707070"></div>
<svg class="a" style="left:1879px;top:965px" width="14" height="16" viewBox="0 0 14 16" fill="#707070"><path d="M11.5 8 L3.2 2.2 Q2.5 1.8 2.5 2.6 V13.4 Q2.5 14.2 3.2 13.8 Z"/></svg>
<div class="a" style="left:1894px;top:98px;width:26px;height:855px;background:#E4E8EF"></div>
<div class="a" style="left:1897px;top:99px;width:21px;height:858px;border-radius:10.5px;background:#F3F3F3"></div>
<svg class="a" style="left:1899px;top:101px" width="16" height="14" viewBox="0 0 16 14" fill="#707070"><path d="M8 2.5 L13.8 11 Q14.2 12 13.2 12 H2.8 Q1.8 12 2.2 11 Z"/></svg>
<div class="a" style="left:1902px;top:119px;width:11px;height:22px;border-radius:5.5px;background:#707070"></div>
<svg class="a" style="left:1899px;top:939px" width="16" height="14" viewBox="0 0 16 14" fill="#707070"><path d="M8 11.5 L13.8 3 Q14.2 2 13.2 2 H2.8 Q1.8 2 2.2 3 Z"/></svg>
</body></html>
